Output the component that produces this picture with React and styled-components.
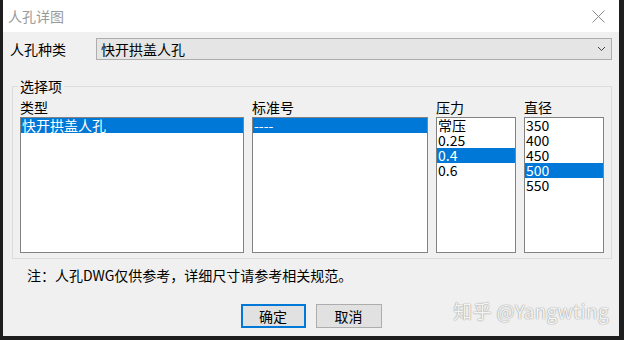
import React from 'react';
import styled, { createGlobalStyle } from 'styled-components';

const GlobalStyle = createGlobalStyle`
  body {
    margin: 0;
    background: #1e1e1e;
    font-family: "Noto Sans CJK SC", "Noto Sans", sans-serif;
  }
`;

const Screen = styled.div`
  width: 624px;
  height: 340px;
  box-sizing: border-box;
  padding: 0 5px 4px 3px;
  background: #1e1e1e;
  display: flex;
`;

const Dialog = styled.div`
  position: relative;
  flex: 1;
  display: flex;
  flex-direction: column;
  background: #f0f0f0;
  font-size: 14px;
  color: #000;
`;

const TitleBar = styled.div`
  height: 32px;
  background: #fff;
  display: flex;
  align-items: center;
  justify-content: space-between;
  padding: 0 14px 0 5px;
  color: #9a9a9a;
  font-size: 14px;
`;

const TypeRow = styled.div`
  display: flex;
  align-items: center;
  margin: 6px 7px 0 7px;
  height: 22px;
`;

const RowLabel = styled.div`
  width: 86px;
  line-height: 22px;
`;

const Combo = styled.div`
  flex: 1;
  height: 22px;
  box-sizing: border-box;
  border: 1px solid #adadad;
  background: #e5e5e5;
  display: flex;
  align-items: center;
  justify-content: space-between;
  padding: 0 5px 0 4px;
`;

const Group = styled.fieldset`
  margin: 18px 7px 0 9px;
  padding: 6px 7px 5px 7px;
  border: 1px solid #dcdcdc;
  display: grid;
  grid-template-columns: 224px 176px 80px 80px;
  column-gap: 8px;
`;

const Legend = styled.legend`
  padding: 0 2px;
  margin-left: -2px;
  line-height: 16px;
`;

const Column = styled.div`
  display: flex;
  flex-direction: column;
`;

const ColLabel = styled.div`
  line-height: 15px;
  height: 17px;
`;

const ListBox = styled.div`
  height: 136px;
  box-sizing: border-box;
  border: 1px solid #828282;
  background: #fff;
`;

const Item = styled.div`
  height: 15px;
  line-height: 15px;
  font-size: 14px;
  padding-left: 1px;
  white-space: nowrap;
  background: ${p => (p.selected ? '#0078d7' : 'transparent')};
  color: ${p => (p.selected ? '#fff' : '#000')};
`;

const Note = styled.div`
  margin: 8px 0 0 24px;
  line-height: 16px;
`;

const Buttons = styled.div`
  display: flex;
  justify-content: center;
  gap: 10px;
  margin-top: 21px;
`;

const Button = styled.div`
  width: ${p => (p.primary ? '65px' : '66px')};
  height: 24px;
  box-sizing: border-box;
  border: ${p => (p.primary ? '2px solid #0078d7' : '1px solid #adadad')};
  background: #e1e1e1;
  display: flex;
  align-items: center;
  justify-content: center;
`;

const Watermark = styled.div`
  position: absolute;
  right: 10px;
  bottom: 12px;
  font-family: "Noto Sans CJK SC", "Noto Sans", sans-serif;
  font-size: 19px;
  color: #f4f4f4;
  text-shadow: 0 0 1px rgba(0, 0, 0, 0.4), 0 0 2px rgba(0, 0, 0, 0.2);
  letter-spacing: 0.3px;
`;

const CloseIcon = () => (
  <svg width="13" height="13" viewBox="0 0 13 13">
    <path d="M0.5 0.5 L12.5 12.5 M12.5 0.5 L0.5 12.5" stroke="#8a8a8a" strokeWidth="1" fill="none" />
  </svg>
);

const Chevron = () => (
  <svg width="9" height="6" viewBox="0 0 9 6">
    <path d="M1 1 L4.5 4.5 L8 1" stroke="#444" strokeWidth="1" fill="none" />
  </svg>
);

const columns = [
  { label: '类型', items: ['快开拱盖人孔'], selected: 0 },
  { label: '标准号', items: ['----'], selected: 0 },
  { label: '压力', items: ['常压', '0.25', '0.4', '0.6'], selected: 2 },
  { label: '直径', items: ['350', '400', '450', '500', '550'], selected: 3 },
];

const App = () => (
  <>
    <GlobalStyle />
    <Screen>
      <Dialog>
        <TitleBar>
          <span>人孔详图</span>
          <CloseIcon />
        </TitleBar>
        <TypeRow>
          <RowLabel>人孔种类</RowLabel>
          <Combo>
            <span>快开拱盖人孔</span>
            <Chevron />
          </Combo>
        </TypeRow>
        <Group>
          <Legend>选择项</Legend>
          {columns.map(col => (
            <Column key={col.label}>
              <ColLabel>{col.label}</ColLabel>
              <ListBox>
                {col.items.map((it, i) => (
                  <Item key={it} selected={i === col.selected}>{it}</Item>
                ))}
              </ListBox>
            </Column>
          ))}
        </Group>
        <Note>注：人孔DWG仅供参考，详细尺寸请参考相关规范。</Note>
        <Buttons>
          <Button primary>确定</Button>
          <Button>取消</Button>
        </Buttons>
        <Watermark>知乎 @Yangwting</Watermark>
      </Dialog>
    </Screen>
  </>
);

export default App;
